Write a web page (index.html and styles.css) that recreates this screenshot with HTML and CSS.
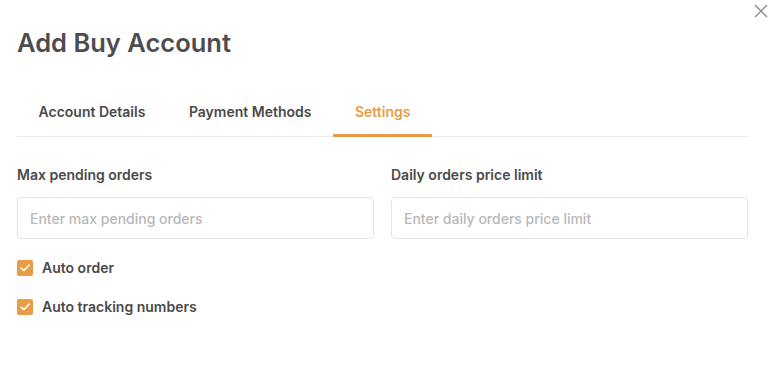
FILE: index.html
```html
<!DOCTYPE html>
<html lang="en">
<head>
    <meta charset="UTF-8">
    <meta name="viewport" content="width=device-width, initial-scale=1.0">
    <title>Add Buy Account</title>
    <link rel="stylesheet" href="styles.css">
</head>
<body>
    <div class="modal">
        <button class="close-btn" aria-label="Close">
            <svg width="14" height="14" viewBox="0 0 14 14"><path d="M1 1 L13 13 M13 1 L1 13" stroke="#8a8a8a" stroke-width="1.4" fill="none"/></svg>
        </button>
        <h1 class="modal-title">Add Buy Account</h1>
        <div class="tabs">
            <a href="#" class="tab">Account Details</a>
            <a href="#" class="tab">Payment Methods</a>
            <a href="#" class="tab active">Settings</a>
        </div>
        <div class="form-grid">
            <div class="field">
                <label class="field-label">Max pending orders</label>
                <input type="text" class="field-input" placeholder="Enter max pending orders">
            </div>
            <div class="field">
                <label class="field-label">Daily orders price limit</label>
                <input type="text" class="field-input" placeholder="Enter daily orders price limit">
            </div>
        </div>
        <div class="checks">
            <label class="check-row">
                <span class="check-box"><svg width="10" height="8" viewBox="0 0 10 8"><path d="M1 4 L4 6.5 L9 1.2" stroke="#fff" stroke-width="1.6" fill="none" stroke-linecap="round" stroke-linejoin="round"/></svg></span>
                Auto order
            </label>
            <label class="check-row">
                <span class="check-box"><svg width="10" height="8" viewBox="0 0 10 8"><path d="M1 4 L4 6.5 L9 1.2" stroke="#fff" stroke-width="1.6" fill="none" stroke-linecap="round" stroke-linejoin="round"/></svg></span>
                Auto tracking numbers
            </label>
        </div>
    </div>
</body>
</html>
```

FILE: styles.css
```css
body {
    margin: 0;
    padding: 0;
    background-color: #fff;
    font-family: Inter, "Noto Sans", sans-serif;
    color: #4a4a4a;
}
.modal {
    position: relative;
    padding: 28px 20px 0 17px;
}
.close-btn {
    position: absolute;
    top: 4px;
    right: 0;
    background: none;
    border: none;
    padding: 0;
    cursor: pointer;
    line-height: 0;
}
.modal-title {
    margin: 0;
    font-size: 25.5px;
    line-height: 30px;
    font-weight: 600;
    color: #4d4d4d;
}
.tabs {
    display: flex;
    margin-top: 31px;
    border-bottom: 1px solid #ebebeb;
}
.tab {
    padding: 14px 22px 14px 21.5px;
    font-size: 14px;
    line-height: 17px;
    font-weight: 600;
    color: #4a4a4a;
    text-decoration: none;
    border-bottom: 3px solid transparent;
    margin-bottom: -1px;
}
.tab.active {
    color: #e89c45;
    border-bottom-color: #e89c45;
}
.form-grid {
    display: grid;
    grid-template-columns: 1fr 1fr;
    gap: 17px;
    margin-top: 29px;
}
.field {
    display: flex;
    flex-direction: column;
}
.field-label {
    font-size: 14px;
    line-height: 17px;
    font-weight: 600;
    color: #4a4a4a;
    margin-bottom: 14px;
}
.field-input {
    height: 42px;
    box-sizing: border-box;
    border: 1px solid #e4e4e4;
    border-radius: 4px;
    padding: 0 12px;
    font-family: Inter, "Noto Sans", sans-serif;
    font-size: 14px;
    color: #333;
    outline: none;
}
.field-input::placeholder {
    color: #b8b8b8;
    font-weight: 500;
}
.checks {
    display: flex;
    flex-direction: column;
    gap: 22px;
    margin-top: 20px;
}
.check-row {
    display: flex;
    align-items: center;
    gap: 9px;
    font-size: 14px;
    line-height: 17px;
    font-weight: 600;
    color: #4a4a4a;
}
.check-box {
    width: 16px;
    height: 16px;
    border-radius: 2px;
    background-color: #e89c45;
    display: flex;
    align-items: center;
    justify-content: center;
}
```
